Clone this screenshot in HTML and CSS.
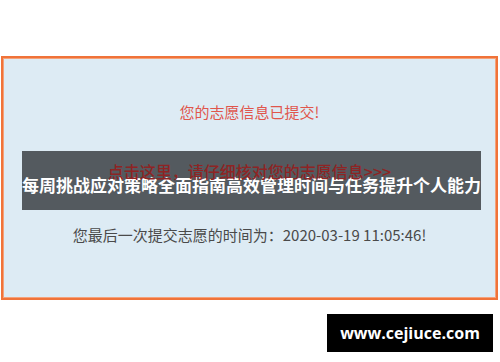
FILE: index.html
```html
<!DOCTYPE html>
<html lang="zh">
<head>
<meta charset="utf-8">
<link rel="stylesheet" href="styles.css">
</head>
<body>
<div class="page">
  <div class="notice">
    <p class="notice-title">您的志愿信息已提交!</p>
    <p class="notice-link">点击这里，请仔细核对您的志愿信息&gt;&gt;&gt;</p>
    <p class="notice-time">您最后一次提交志愿的时间为：2020-03-19 11:05:46!</p>
    <div class="overlay">
      <h1 class="overlay-title">每周挑战应对策略全面指南高效管理时间与任务提升个人能力</h1>
    </div>
  </div>
  <div class="watermark">www.cejiuce.com</div>
</div>
</body>
</html>
```

FILE: styles.css
```css
html, body {
  margin: 0;
  padding: 0;
  background: #ffffff;
}
.page {
  position: relative;
  width: 500px;
  height: 362px;
  padding-top: 56px;
  box-sizing: border-box;
  font-family: "Noto Sans CJK SC", "Noto Sans", sans-serif;
}
.notice {
  position: relative;
  margin-left: 1px;
  width: 497px;
  height: 244px;
  box-sizing: border-box;
  border: 2px solid #f07339;
  box-shadow: inset 0 0 0 1px #f4a27a;
  background: #ddebf4;
  display: flex;
  flex-direction: column;
  align-items: center;
  padding-top: 44px;
}
.notice p {
  margin: 0;
  font-size: 15px;
  line-height: 20px;
}
.notice-title {
  color: #e0564c;
}
.notice-link {
  margin-top: 39px !important;
  color: #8e2424;
  font-size: 16px !important;
  font-weight: 500;
  position: relative;
  z-index: 2;
}
.notice-time {
  margin-top: 44px !important;
  color: #4a4a4a;
}
.overlay {
  position: absolute;
  left: 19px;
  top: 93px;
  width: 459px;
  height: 59px;
  background: rgba(65, 70, 74, 0.88);
  display: flex;
  align-items: center;
  justify-content: center;
  z-index: 1;
}
.overlay-title {
  position: relative;
  z-index: 3;
  margin: 0;
  margin-top: 9px;
  color: #ffffff;
  font-size: 17px;
  font-weight: 700;
  line-height: 22px;
  white-space: nowrap;
}
.watermark {
  position: absolute;
  left: 327px;
  top: 314px;
  width: 166px;
  height: 38px;
  background: #000000;
  color: #ffffff;
  font-family: "Open Sans", "DejaVu Sans", sans-serif;
  font-weight: 700;
  font-size: 16px;
  display: flex;
  align-items: center;
  justify-content: center;
}
```
